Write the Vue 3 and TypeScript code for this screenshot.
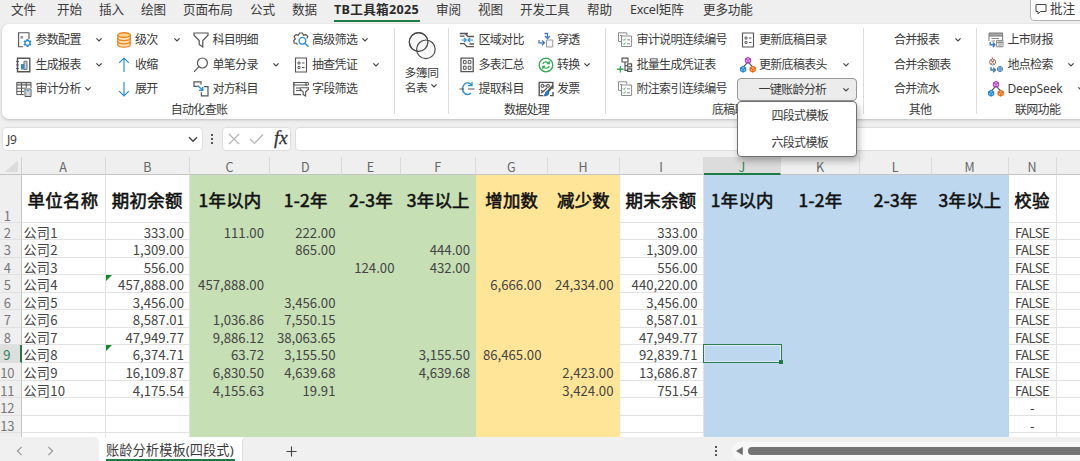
<script setup lang="ts">
interface Shape { d: string; s?: string; f?: string; w?: number }
interface Item { text: string; icon?: string; chev?: 'near' | 'end' | 'far'; active?: boolean }
interface Group { cls: string; label: string; cols: { cls: string; items: Item[] }[] }

const DARK = '#555555'
const BLUE = '#2b8fd6'
const PALE = '#8c8c8c'
const GREEN = '#2fa84f'
const NAVY = '#3f78bd'

const ring = (x: number, y: number, r: number) =>
  `M${x - r} ${y}a${r} ${r} 0 1 0 ${2 * r} 0a${r} ${r} 0 1 0 ${-2 * r} 0z`

const hex = (x: number, y: number) =>
  `M${x} ${y - 2.9}l2.5 1.4v2.9l-2.5 1.4l-2.5 -1.4v-2.9zM${x - 2.3} ${y - 1.4}l2.3 1.3l2.3 -1.3M${x} ${y - 0.1}v2.6`

const network: Shape[] = [
  { d: 'M6.8 6.2L3.8 9.6M9.2 6.2L12.2 9.6', s: DARK, w: 1.2 },
  { d: hex(8, 3.4), s: '#b144c0', w: 1.3, f: '#ecd0f0' },
  { d: hex(3.1, 12.3), s: '#2187ce', w: 1.3, f: '#a9d6f3' },
  { d: hex(12.7, 12.3), s: '#ea6b12', w: 1.3, f: '#f8c193' },
]
const checklist: Shape[] = [
  { d: 'M1.5 9.5V.8H9.8V3M1.5 9.5H4M4.5 4H14.6V14.5H4.5zM3 3.5H5', s: PALE },
  { d: 'M6 7.5l1 1l1.6 -2M6 11.5l1 1l1.6 -2', s: GREEN, w: 0.9 },
  { d: 'M10 7.8H13M10 11.8H13', s: PALE },
]
const listPage: Shape[] = [
  { d: 'M2.5 1H13.5V15H2.5z', s: DARK, w: 1.1 },
  { d: 'M5 5h2v2h-2zM5 9.5h2v2h-2z', s: DARK, w: 0.9 },
  { d: 'M9 6H11.5M9 10.5H11.5', s: DARK, w: 1.2 },
]

const icons: Record<string, Shape[]> = {
  param: [
    { d: 'M13 7V.8H2.6V14.8H7', s: DARK, w: 1.1 },
    { d: 'M4.5 4h2.6v2.6h-2.6z', f: '#999' },
    { d: 'M11.5 7V15M8 9L15 13M8 13L15 9', s: BLUE, w: 1.9 },
    { d: ring(11.5, 11, 2.5), s: BLUE, f: '#fff', w: 1.4 },
  ],
  report: [
    { d: 'M1.5 1.2H13.8V14.8H1.5z', s: DARK, w: 1.4 },
    { d: 'M0 4.5H3M0 8H3M0 11.5H3', s: DARK, w: 0.9 },
    { d: 'M5 7h3v5.5h-3z', f: BLUE },
    { d: 'M8 4.2h3v8.3h-3z', s: '#777', f: '#b9cddd' },
  ],
  audit: [
    { d: 'M.8 1.4H15V4H.8z', s: DARK, f: '#ccc' },
    { d: 'M.8 4V13.6H8M5.5 1.5V13.6M10.2 1.5V7M15 4V7M.8 7.2H9M.8 10.4H8', s: DARK },
    { d: 'M9 8h6v7.5h-6z', s: DARK, f: '#fff' },
    { d: 'M10.4 9.8H13.6', s: BLUE, w: 1.3 },
    { d: 'M10.3 12H11.4M12.6 12H13.7M10.3 14H11.4M12.6 14H13.7', s: DARK, w: 1.1 },
  ],
  stack: [
    { d: 'M1.8 3V12.8C1.8 16 14.2 16 14.2 12.8V3', s: '#ec8422', f: '#fbe0b4', w: 1.3 },
    { d: 'M1.8 3C1.8 0 14.2 0 14.2 3S1.8 6 1.8 3z', s: '#ec8422', f: '#f9d593', w: 1.3 },
    { d: 'M1.8 6.3C1.8 9.3 14.2 9.3 14.2 6.3M1.8 9.6C1.8 12.6 14.2 12.6 14.2 9.6', s: '#ec8422', w: 1.3 },
  ],
  up: [{ d: 'M8 15V1M3.2 5.8L8 1L12.8 5.8', s: BLUE, w: 1.2 }],
  down: [{ d: 'M8 1V15M3.2 10.2L8 15L12.8 10.2', s: BLUE, w: 1.2 }],
  funnel: [{ d: 'M1 1H15V3.2L9.8 8.6V15L6.2 12.4V8.6L1 3.2z', s: DARK, w: 1.2 }],
  search: [{ d: ring(9.4, 6, 5), s: DARK, w: 1.2 }, { d: 'M5.7 9.8L1 14.8', s: DARK, w: 1.2 }],
  swap: [
    { d: 'M4.5 5.4H1V.8H8V3.5M11 5.6H15V14.8H8.4V11.2', s: DARK, w: 1.2 },
    { d: 'M4.6 4.6L9.6 9.2M9.8 5.8V9.4H6', s: BLUE, w: 1.4 },
  ],
  gearsearch: [
    { d: 'M4.5 12.8L3.6 11.2L1.2 11L.7 8.6L2.3 7L1.2 4.2L3 2.6L5.2 3.2L6.6 1H9.4L10.6 3.2L13 2.6L14.8 4.4L13.8 6.6', s: DARK, w: 1.2 },
    { d: ring(9.4, 8.8, 3.4), s: BLUE, w: 1.3 },
    { d: 'M12 11.3L15.4 14.8', s: BLUE, w: 1.5 },
  ],
  listPage,
  formfilter: [
    { d: 'M13 5V1.5H.8V13.6H8', s: DARK, w: 1.2 },
    { d: 'M.8 4H15.4V1.5H.8zM3 7H6M3 9.6H8', s: DARK },
    { d: 'M7 6.8H15.6V8L12.6 11V15L10.2 13.6V11L7 8z', s: DARK, f: '#fff', w: 1.1 },
  ],
  compare: [
    { d: 'M.8 1.5H9M.8 4.2H5.5M6 1.5L9 4.5H15M7 14.7H15M10.5 12H15M1 11.6H5L8 14.7', s: DARK, w: 1.3 },
    { d: 'M2.5 8H7M5 5.8L7.2 8L5 10.2M14 8H9M11.2 5.8L9 8L11.2 10.2', s: BLUE, w: 1.2 },
  ],
  tiles: [
    { d: 'M2 1.2H14.2V14.6H2z', s: DARK, w: 1.3 },
    { d: 'M4.4 3.6h2.7v3.1h-2.7zM9.2 3.6h2.7v3.1h-2.7zM4.4 9.2h2.7v3.1h-2.7zM9.2 9.2h2.7v3.1h-2.7z', s: DARK, w: 1 },
  ],
  extract: [
    { d: 'M12.6 4.2A5 5.8 0 1 0 12 12', s: BLUE, w: 1.4 },
    { d: 'M13 .8V4.6H9', s: BLUE, w: 1.3 },
    { d: 'M.5 8H5M9 8H15.5', s: DARK, w: 1.2 },
  ],
  drill: [
    { d: 'M8.5 8H14.8V15H8.5z', s: '#999', f: '#f7f7f7' },
    { d: 'M6.5 1.5H9.5V6M7 4L9.5 6.5L12 4', s: NAVY, w: 1.3 },
    { d: 'M1 8V10.8H6M4 8.4L6.4 10.8L4 13.2', s: NAVY, w: 1.3 },
  ],
  convert: [
    { d: ring(8, 8, 6.8), s: GREEN, w: 1.3 },
    { d: 'M4.8 7.2C5.3 4.4 9.2 4 10.6 6.2M11.2 8.8C10.6 11.8 6.8 12 5.4 9.8M11.2 4V6.6H8.8M4.8 12V9.4H7.2', s: GREEN, w: 1.2 },
  ],
  invoice: [
    { d: 'M14.8 8V1.4H1.2V14.6H5M12 14.6H15V11', s: DARK, w: 1.4 },
    { d: ring(4.5, 4.8, 1.4) + ring(10, 4.8, 1.4) + 'M3 9L5 11L9 7M6 5L9 5M3 12L7 9', s: DARK, w: 1.1 },
    { d: 'M15 4.6L9.5 11', s: DARK, w: 2.2 },
    { d: 'M9.6 9.6L11.4 11.4C11 14.8 8 15.6 5 15.2C7.2 13.8 6.4 10.6 9.6 9.6z', f: '#2576bf' },
  ],
  checklist,
  batch: [
    { d: 'M5 1.2H11V5H5zM8 5V13.4H10.6M8 8.6H10.6M10.6 6.8H14.6V9.8H10.6zM10.6 11.8H14.6V14.4H10.6z', s: DARK, w: 1.2 },
    { d: 'M3.4 9V15.4M.2 12.2H6.6', s: GREEN, w: 1.4 },
  ],
  network,
  market: [
    { d: 'M1 1H14.6V4H1z', s: '#777', f: '#aaa' },
    { d: 'M1 4V9M14.6 4V8M3.5 6.5H11M3.5 9H7', s: '#888', w: 1.1 },
    { d: 'M8.6 8.4H15V14.8H8.6zM8.6 10.4H15M11 8.6V14.8M13 8.6V14.8', s: '#888', f: '#fff' },
    { d: 'M2.2 10V12.8H6.6M4.8 10.6L7 12.8L4.8 15', s: NAVY, w: 1.4 },
  ],
  place: [
    { d: ring(4.6, 5, 3), s: '#777' },
    { d: 'M3 3.4L6.2 6.6M6.2 3.4L3 6.6M4.5 .4V2', s: '#d6553e', w: 1.1 },
    { d: 'M3 10V13H7M5.2 10.8L7.4 13L5.2 15.2', s: NAVY, w: 1.4 },
    { d: ring(12, 12, 2.6) + 'M9.6 12H14.4M12 9.6V14.4', s: NAVY, f: '#c9daf0', w: 0.9 },
  ],
}

const tabs = ['文件', '开始', '插入', '绘图', '页面布局', '公式', '数据', 'TB工具箱2025', '审阅', '视图', '开发工具', '帮助', 'Excel矩阵', '更多功能']

const groups: Group[] = [
  {
    cls: 'g-audit', label: '自动化查账', cols: [
      { cls: 'w87', items: [{ text: '参数配置', icon: 'param', chev: 'end' }, { text: '生成报表', icon: 'report', chev: 'end' }, { text: '审计分析', icon: 'audit', chev: 'near' }] },
      { cls: 'w65', items: [{ text: '级次', icon: 'stack', chev: 'end' }, { text: '收缩', icon: 'up' }, { text: '展开', icon: 'down' }] },
      { cls: 'w87', items: [{ text: '科目明细', icon: 'funnel' }, { text: '单笔分录', icon: 'search', chev: 'end' }, { text: '对方科目', icon: 'swap' }] },
      { cls: 'w87', items: [{ text: '高级筛选', icon: 'gearsearch', chev: 'near' }, { text: '抽查凭证', icon: 'listPage', chev: 'end' }, { text: '字段筛选', icon: 'formfilter' }] },
    ],
  },
  { cls: 'g-books', label: '', cols: [] },
  {
    cls: 'g-data', label: '数据处理', cols: [
      { cls: 'w66', items: [{ text: '区域对比', icon: 'compare' }, { text: '多表汇总', icon: 'tiles' }, { text: '提取科目', icon: 'extract' }] },
      { cls: 'w52', items: [{ text: '穿透', icon: 'drill' }, { text: '转换', icon: 'convert', chev: 'near' }, { text: '发票', icon: 'invoice' }] },
    ],
  },
  {
    cls: 'g-draft', label: '底稿助手', cols: [
      { cls: 'w110', items: [{ text: '审计说明连续编号', icon: 'checklist' }, { text: '批量生成凭证表', icon: 'batch' }, { text: '附注索引连续编号', icon: 'checklist' }] },
      { cls: 'w110', items: [{ text: '更新底稿目录', icon: 'listPage' }, { text: '更新底稿表头', icon: 'network', chev: 'end' }, { text: '一键账龄分析', chev: 'end', active: true }] },
    ],
  },
  {
    cls: 'g-other', label: '其他', cols: [
      { cls: 'w68', items: [{ text: '合并报表', chev: 'end' }, { text: '合并余额表' }, { text: '合并流水' }] },
    ],
  },
  {
    cls: 'g-web', label: '联网功能', cols: [
      { cls: 'w87', items: [{ text: '上市财报', icon: 'market' }, { text: '地点检索', icon: 'place', chev: 'end' }, { text: 'DeepSeek', icon: 'network', chev: 'far' }] },
    ],
  },
]
const menu = ['四段式模板', '六段式模板']

const letters = 'ABCDEFGHIJKLMN'.split('').concat('')
const titles = ['单位名称', '期初余额', '1年以内', '1-2年', '2-3年', '3年以上', '增加数', '减少数', '期末余额', '1年以内', '1-2年', '2-3年', '3年以上', '校验', '']

const records: string[][] = [
  ['公司1', '333.00', '111.00', '222.00', '', '', '', '', '333.00'],
  ['公司2', '1,309.00', '', '865.00', '', '444.00', '', '', '1,309.00'],
  ['公司3', '556.00', '', '', '124.00', '432.00', '', '', '556.00'],
  ['公司4', '457,888.00', '457,888.00', '', '', '', '6,666.00', '24,334.00', '440,220.00'],
  ['公司5', '3,456.00', '', '3,456.00', '', '', '', '', '3,456.00'],
  ['公司6', '8,587.01', '1,036.86', '7,550.15', '', '', '', '', '8,587.01'],
  ['公司7', '47,949.77', '9,886.12', '38,063.65', '', '', '', '', '47,949.77'],
  ['公司8', '6,374.71', '63.72', '3,155.50', '', '3,155.50', '86,465.00', '', '92,839.71'],
  ['公司9', '16,109.87', '6,830.50', '4,639.68', '', '4,639.68', '', '2,423.00', '13,686.87'],
  ['公司10', '4,175.54', '4,155.63', '19.91', '', '', '', '3,424.00', '751.54'],
  [], [], [],
]
const rows = records.map((r, i) =>
  letters.map((_, c) => {
    if (c === 13) return r.length ? 'FALSE' : i < 12 ? '-' : ''
    return r[c] ?? ''
  }),
)
const tone = (c: number) =>
  c >= 2 && c <= 5 ? 'green' : c === 6 || c === 7 ? 'yellow' : c >= 9 && c <= 12 ? 'blue' : 'plain'
const align = (c: number) => (c === 0 ? 'left' : c === 13 ? 'mid' : 'right')
const flagged = (row: number, c: number) => c === 1 && (row === 5 || row === 9)
</script>

<template>
  <div class="app">
    <nav class="tabs">
      <span v-for="(t, i) in tabs" :key="t" class="tab" :class="[`t${i}`, { current: i === 7 }]">{{ t }}</span>
      <span class="comment">
        <svg width="12" height="12" viewBox="0 0 12 12"><path d="M1 1.5H11V8.5H5.5L3 11V8.5H1z" fill="none" stroke="#444" /></svg>批注
      </span>
    </nav>

    <section class="ribbon">
      <div v-for="g in groups" :key="g.cls" class="group" :class="g.cls">
        <div v-if="g.cols.length" class="cols">
          <div v-for="(col, ci) in g.cols" :key="ci" class="col" :class="col.cls">
            <div v-for="it in col.items" :key="it.text" class="item" :class="{ active: it.active }">
              <svg v-if="it.icon" class="icon" width="16" height="16" viewBox="0 0 16 16">
                <path v-for="(p, k) in icons[it.icon]" :key="k" :d="p.d" :stroke="p.s ?? 'none'" :fill="p.f ?? 'none'" :stroke-width="p.w ?? 1" />
              </svg>
              <span class="name" :class="{ latin: it.chev === 'far' }">{{ it.text }}</span>
              <svg v-if="it.chev" class="chev" :class="it.chev" width="8" height="6" viewBox="0 0 8 6"><path d="M1.4 1.4L4 4L6.6 1.4" fill="none" stroke="#444" stroke-width="1.2" /></svg>
              <div v-if="it.active" class="menu">
                <div v-for="m in menu" :key="m" class="option">{{ m }}</div>
              </div>
            </div>
          </div>
        </div>
        <div v-if="g.cols.length" class="label">{{ g.label }}</div>
        <div v-else class="big">
          <svg width="30" height="30" viewBox="0 0 30 30">
            <circle cx="11.6" cy="11" r="9.3" fill="#f7f7f7" stroke="#4a4a4a" stroke-width="1.2" />
            <circle cx="18.9" cy="18.3" r="9.3" fill="#f7f7f7" fill-opacity=".7" stroke="#4a4a4a" stroke-width="1.2" />
            <circle cx="11.6" cy="11" r="9.3" fill="none" stroke="#4a4a4a" stroke-width="1.2" />
          </svg>
          <span>多簿同</span>
          <span>名表<svg class="chev near" width="8" height="6" viewBox="0 0 8 6"><path d="M1.4 1.4L4 4L6.6 1.4" fill="none" stroke="#444" stroke-width="1.2" /></svg></span>
        </div>
      </div>
    </section>

    <section class="formula">
      <div class="field namebox">
        <span>J9</span>
        <svg width="10" height="7" viewBox="0 0 10 7"><path d="M1 1.2L5 5.2L9 1.2" fill="none" stroke="#444" stroke-width="1.4" /></svg>
      </div>
      <svg class="dots" width="4" height="12" viewBox="0 0 4 12"><path d="M1 1h2v2h-2zM1 5h2v2h-2zM1 9h2v2h-2z" fill="#555" /></svg>
      <div class="field tools">
        <svg width="12" height="12" viewBox="0 0 12 12"><path d="M1 1L11 11M11 1L1 11" stroke="#b5b5b5" stroke-width="1.2" /></svg>
        <svg width="15" height="12" viewBox="0 0 15 12"><path d="M1 6L5.5 10.5L14 1.5" fill="none" stroke="#b5b5b5" stroke-width="1.2" /></svg>
        <i class="fx">fx</i>
      </div>
      <div class="field bar"></div>
    </section>

    <section class="sheet">
      <div class="corner"><svg width="13" height="12" viewBox="0 0 13 12"><path d="M13 0V12H0z" fill="#dcdcdc" /></svg></div>
      <div v-for="(l, c) in letters" :key="'h' + c" class="colhead" :class="{ sel: c === 9 }">{{ l }}</div>
      <div class="rowhead first">1</div>
      <div v-for="(t, c) in titles" :key="'t' + c" class="cell title" :class="tone(c)">{{ t }}</div>
      <template v-for="(r, i) in rows" :key="i">
        <div class="rowhead" :class="{ sel: i === 7 }">{{ i < 12 ? i + 2 : '' }}</div>
        <div v-for="(v, c) in r" :key="c" class="cell" :class="[tone(c), align(c), { picked: i === 7 && c === 9, flag: flagged(i + 2, c) }]">{{ v }}</div>
      </template>
    </section>

    <footer class="footer">
      <div class="pager">
        <svg width="7" height="10" viewBox="0 0 7 10"><path d="M5.6 .8L1.4 5L5.6 9.2" fill="none" stroke="#999" stroke-width="1.2" /></svg>
        <svg width="7" height="10" viewBox="0 0 7 10"><path d="M1.4 .8L5.6 5L1.4 9.2" fill="none" stroke="#999" stroke-width="1.2" /></svg>
      </div>
      <div class="sheettab"><span>账龄分析模板(四段式)</span></div>
      <div class="rest">
        <svg class="plus" width="11" height="11" viewBox="0 0 11 11"><path d="M5.5 .5V10.5M.5 5.5H10.5" stroke="#444" stroke-width="1.1" /></svg>
        <svg class="grip" width="4" height="12" viewBox="0 0 4 12"><path d="M1 1h2v2h-2zM1 5h2v2h-2zM1 9h2v2h-2z" fill="#555" /></svg>
        <div class="track">
          <svg width="7" height="8" viewBox="0 0 7 8"><path d="M6.6 .2V7.8L.4 4z" fill="#6e6e6e" stroke="#6e6e6e" stroke-width=".5" /></svg>
          <div class="thumb"></div>
        </div>
      </div>
    </footer>
  </div>
</template>

<style>
body { margin: 0; overflow: hidden; }
</style>

<style scoped>
.app { width: 1080px; height: 461px; overflow: hidden; background: #efefef; color: #3a3a3a; font-family: "Noto Sans", "Noto Sans CJK SC", sans-serif; font-size: 12px; display: flex; flex-direction: column; box-sizing: border-box; }
.app * { box-sizing: border-box; }
svg { display: block; flex: none; }

.tabs { height: 24px; flex: none; display: flex; position: relative; padding-left: 11px; white-space: nowrap; font-size: 12.6px; letter-spacing: -.2px; line-height: 19px; }
.tab { height: 22px; flex: none; overflow: visible; }
.t0 { width: 46px; } .t1, .t2 { width: 42px; } .t3 { width: 42px; } .t4 { width: 67px; } .t5 { width: 42px; } .t6 { width: 42px; }
.t7 { width: 86px; margin-right: 16px; } .t8 { width: 42px; } .t9 { width: 42px; } .t10 { width: 67px; } .t11 { width: 43px; } .t12 { width: 73px; }
.current { font-weight: 700; border-bottom: 2px solid #1e7b45; color: #2a2a2a; letter-spacing: .3px; }
.comment { position: absolute; left: 1030px; top: -4px; width: 60px; height: 25px; border: 1px solid #b5b5b5; border-radius: 4px; background: #fff; display: flex; align-items: center; gap: 3px; padding-left: 4px; }

.ribbon { flex: none; height: 95px; margin: 0 -8px 0 2px; background: #fff; border-radius: 7px; display: flex; box-shadow: 0 1px 3px rgba(0, 0, 0, .22); padding-top: 4px; position: relative; z-index: 2; }
.group { height: 86px; flex: none; border-right: 1px solid #dcdcdc; }
.g-audit { width: 393px; padding-left: 14px; }
.g-books { width: 54px; }
.g-data { width: 157px; padding-left: 10px; }
.g-draft { width: 258px; padding-left: 11px; }
.g-other { width: 113px; padding-left: 30px; }
.g-web { width: 110px; padding-left: 11px; border-right: 0; }
.cols { display: flex; gap: 12.5px; }
.col { display: flex; flex-direction: column; }
.w87 { width: 87px; } .w65 { width: 65px; } .w66 { width: 66px; } .w52 { width: 52px; } .w110 { width: 110px; } .w68 { width: 68px; }
.item { height: 24.5px; display: flex; align-items: center; gap: 3.5px; white-space: nowrap; letter-spacing: -.7px; position: relative; }
.name { line-height: 18px; }
.latin { letter-spacing: -.15px; }
.chev.end { margin-left: auto; }
.g-audit .chev.end { margin-right: 1px; transform: translateX(1px); }
.chev.near { margin-left: 0; }
.chev.far { margin-left: 11px; }
.active { width: 120px; height: 23px; margin: 1px 0 0 -3px; background: #ececec; border: 1px solid #979797; border-radius: 4px; padding: 0 6px 0 21px; }
.menu { position: absolute; left: -1px; top: 22px; width: 120px; height: 56px; border: 1px solid #707070; border-radius: 4px; background: #fff; box-shadow: 2px 4px 7px rgba(0, 0, 0, .28); }
.option { height: 27px; line-height: 27px; padding-left: 34px; }
.label { height: 17px; line-height: 16px; letter-spacing: -.7px; text-align: center; }
.g-audit .label { margin-left: -12px; }
.g-data .label { margin-left: -11px; }
.g-draft .label { text-align: left; margin-left: 95px; }
.g-other .label { margin-left: -30px; }
.g-web .label { text-align: left; margin-left: 27px; }
.big { display: flex; flex-direction: column; align-items: center; font-family: "Noto Sans CJK SC", sans-serif; font-size: 11.8px; letter-spacing: -.5px; line-height: 15px; }
.big > svg { margin: 3px 0 2.5px; }
.big span { display: flex; align-items: center; gap: 3px; height: 15px; }

.formula { flex: none; height: 38px; display: flex; padding: 8px 0 0 2px; align-items: flex-start; }
.field { flex: none; height: 24px; background: #fff; border: 1px solid #dedede; border-radius: 4px; display: flex; align-items: center; }
.namebox { width: 201px; justify-content: space-between; padding: 0 4px 0 4px; font-size: 12px; letter-spacing: -.4px; }
.dots { margin: 6px 8px 0 7px; }
.tools { width: 69px; padding-left: 5px; gap: 9px; }
.fx { font-family: "Liberation Serif", serif; font-size: 19px; line-height: 18px; color: #333; -webkit-text-stroke: .3px #333; margin-left: 1px; padding-bottom: 2px; }
.bar { width: 800px; margin-left: 4px; }

.sheet { flex: none; height: 279.5px; overflow: hidden; display: grid; grid-template-columns: 21.5px 84px 84.5px 80px 71.5px 59px 75.5px 71.5px 72px 84px 77.5px 79px 71.5px 77px 48px 24px; grid-template-rows: 17.5px 48px; grid-auto-rows: 17.57px; font-family: "Noto Sans CJK SC", sans-serif; font-size: 13.2px; color: #444; }
.corner { display: flex; justify-content: flex-end; padding: 3px 3px 0 0; border-right: 1px solid #d0d0d0; border-bottom: 1px solid #c4c4c4; }
.colhead { text-align: center; line-height: 19px; font-size: 12.5px; color: #666; border-right: 1px solid #dadada; border-bottom: 1px solid #c4c4c4; }
.colhead.sel { background: #dcdcdc; color: #2d8657; border-bottom: 2px solid #1e7b45; }
.rowhead { font-size: 13px; line-height: 19px; color: #777; border-right: 1px solid #c4c4c4; border-bottom: 1px solid #e0e0e0; text-align: center; padding-right: 6px; white-space: nowrap; letter-spacing: -.1px; }
.rowhead.first { padding-top: 31px; }
.rowhead.sel { background: #dedede; color: #2d8657; border-right: 2px solid #1e7b45; }
.cell { line-height: 19.5px; white-space: nowrap; position: relative; }
.plain { background: #fff; border-right: 1px solid #e2e2e2; border-bottom: 1px solid #e2e2e2; }
.green { background: #c6dfb4; }
.yellow { background: #ffe598; }
.blue { background: #bdd7ee; }
.left { padding-left: 2px; letter-spacing: .15px; }
.right { text-align: right; padding-right: 6px; }
.plain.right { padding-right: 5px; }
.mid { text-align: center; letter-spacing: -.6px; }
.title { font-size: 17.4px; font-weight: 400; -webkit-text-stroke: .6px #111; color: #111; text-align: center; line-height: 50px; letter-spacing: .3px; }
.picked { z-index: 1; }
.picked::before { content: ""; position: absolute; inset: -1px -1px 0 -1px; border: 1.5px solid #2a7d4f; box-shadow: inset 0 0 0 1px #dfeaf4; }
.picked::after { content: ""; position: absolute; right: -2px; bottom: -1px; width: 4px; height: 4px; background: #1e7b45; }
.flag::before { content: ""; position: absolute; left: 0; top: 0; border-top: 6px solid #118a2c; border-right: 6px solid transparent; }

.footer { flex: none; height: 25px; display: flex; background: #fff; }
.pager { width: 99px; background: #f0f0f0; border-radius: 0 5px 0 0; display: flex; gap: 24px; align-items: center; padding: 3px 0 0 16px; }
.sheettab { width: 143px; padding-left: 7px; font-size: 13.2px; letter-spacing: .1px; white-space: nowrap; }
.sheettab span { display: inline-block; height: 24px; width: 129px; line-height: 26px; border-bottom: 2px solid #1e7b45; }
.rest { flex: 1; background: #f0f0f0; border-left: 1px solid #ddd; display: flex; align-items: center; padding: 4px 0 0 43px; border-radius: 5px 0 0 0; }
.grip { margin: 0 14px 0 417px; }
.track { flex: 1; height: 18px; border-radius: 9px 0 0 9px; background: #f7f7f7; display: flex; align-items: center; padding-left: 4px; gap: 5px; }
.thumb { flex: 1; height: 8px; border-radius: 4px 0 0 4px; background: #737373; }
</style>
